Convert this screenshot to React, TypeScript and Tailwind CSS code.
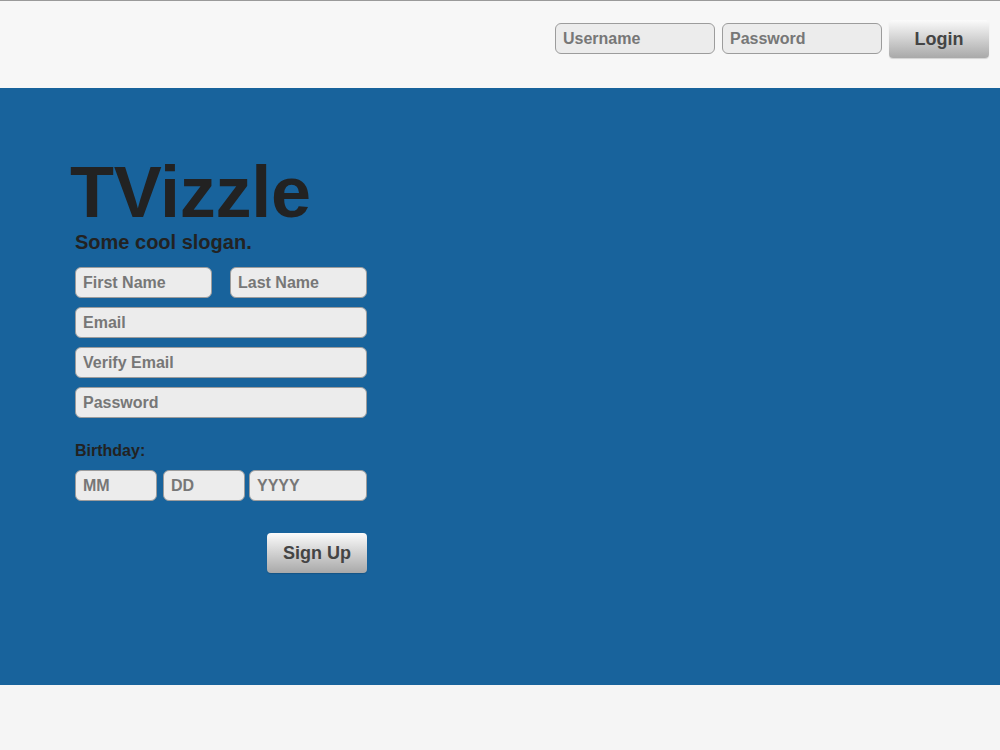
import React from "react"

const font = { fontFamily: '"Liberation Sans", Arial, sans-serif' }

const inputCls =
  "h-[31px] rounded-[6px] border border-[#9c9c9c] bg-[#ececec] pl-[7px] text-[16px] font-bold text-[#333] placeholder:text-[#777] outline-none"

const btnCls =
  "w-[100px] rounded-[4px] bg-gradient-to-b from-[#fbfbfb] to-[#a9a9a9] text-[18px] font-bold text-[#444] shadow-[0_1px_1px_rgba(0,0,0,0.15)]"

function Header() {
  return (
    <header className="h-[88px] border-t border-[#9a9a9a] bg-[#f7f7f7]">
      <div className="flex items-start justify-end gap-[7px] pr-[11px] pt-[19px]">
        <input className={`${inputCls} mt-[3px] w-[160px]`} placeholder="Username" />
        <input className={`${inputCls} mt-[3px] w-[160px]`} type="password" placeholder="Password" />
        <button className={`${btnCls} h-[38px]`}>Login</button>
      </div>
    </header>
  )
}

function SignUp() {
  return (
    <section className="h-[597px] bg-[#18639c] pt-[68px]">
      <h1 className="pl-[70px] text-[72px] font-bold leading-none tracking-[-0.3px] text-[#222]">TVizzle</h1>
      <div className="ml-[75px] w-[292px]">
        <p className="mt-[2px] text-[20px] font-bold leading-[24px] text-[#222]">Some cool slogan.</p>
        <div className="mt-[13px] flex flex-col gap-[9px]">
          <div className="flex justify-between">
            <input className={`${inputCls} w-[137px]`} placeholder="First Name" />
            <input className={`${inputCls} w-[137px]`} placeholder="Last Name" />
          </div>
          <input className={`${inputCls} w-full`} placeholder="Email" />
          <input className={`${inputCls} w-full`} placeholder="Verify Email" />
          <input className={`${inputCls} w-full`} type="password" placeholder="Password" />
        </div>
        <p className="mt-[23px] text-[16px] font-bold leading-[20px] text-[#222]">Birthday:</p>
        <div className="mt-[9px] flex">
          <input className={`${inputCls} w-[82px]`} placeholder="MM" />
          <input className={`${inputCls} ml-[6px] w-[82px]`} placeholder="DD" />
          <input className={`${inputCls} ml-[4px] w-[118px]`} placeholder="YYYY" />
        </div>
        <div className="mt-[32px] flex justify-end">
          <button className={`${btnCls} h-[40px]`}>Sign Up</button>
        </div>
      </div>
    </section>
  )
}

export default function App() {
  return (
    <div className="h-[750px] bg-[#f5f5f5]" style={font}>
      <Header />
      <SignUp />
    </div>
  )
}
